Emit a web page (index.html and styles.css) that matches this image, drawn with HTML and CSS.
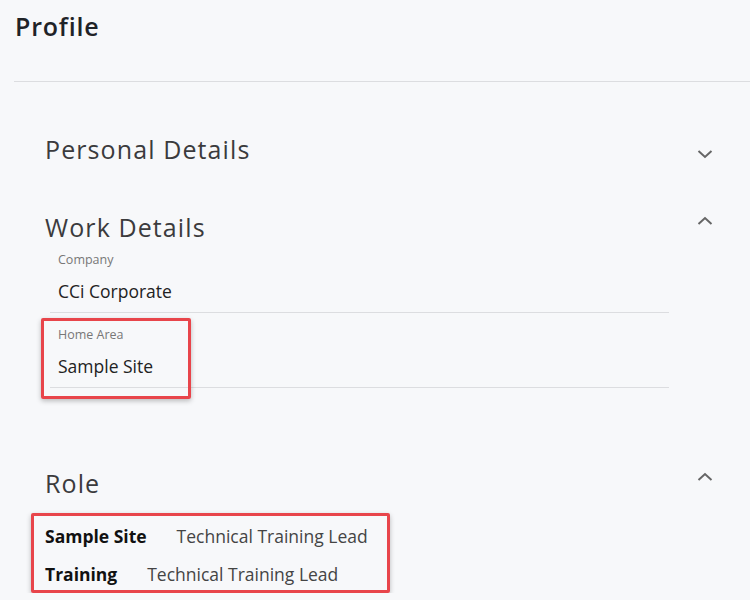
FILE: index.html
```html
<!DOCTYPE html>
<html lang="en">
<head>
    <meta charset="UTF-8">
    <title>Profile</title>
    <link rel="stylesheet" href="styles.css">
</head>
<body>

    <!-- Page header -->
    <header class="page-header">
        <h1>Profile</h1>
    </header>
    <div class="divider"></div>

    <main class="sections">

        <!-- Personal Details (collapsed) -->
        <section class="section">
            <div class="section-head">
                <h2>Personal Details</h2>
                <svg class="chev chev-down" width="16" height="10" viewBox="0 0 16 10"><path d="M1.5 2 L8 8 L14.5 2" fill="none" stroke="#666" stroke-width="2"/></svg>
            </div>
        </section>

        <!-- Work Details -->
        <section class="section">
            <div class="section-head">
                <h2>Work Details</h2>
                <svg class="chev chev-up" width="16" height="10" viewBox="0 0 16 10"><path d="M1.5 8 L8 2 L14.5 8" fill="none" stroke="#666" stroke-width="2"/></svg>
            </div>
            <div class="field">
                <div class="field-label">Company</div>
                <div class="field-value">CCi Corporate</div>
            </div>
            <div class="field">
                <div class="field-label">Home Area</div>
                <div class="field-value">Sample Site</div>
                <span class="highlight highlight-area"></span>
            </div>
        </section>

        <!-- Role -->
        <section class="section section-role">
            <div class="section-head">
                <h2>Role</h2>
                <svg class="chev chev-up" width="16" height="10" viewBox="0 0 16 10"><path d="M1.5 8 L8 2 L14.5 8" fill="none" stroke="#666" stroke-width="2"/></svg>
            </div>
            <div class="role-list">
                <div class="role-row">
                    <span class="role-site">Sample Site</span>
                    <span class="role-title">Technical Training Lead</span>
                </div>
                <div class="role-row">
                    <span class="role-site">Training</span>
                    <span class="role-title">Technical Training Lead</span>
                </div>
                <span class="highlight highlight-role"></span>
            </div>
        </section>

    </main>

</body>
</html>
```

FILE: styles.css
```css
* {
    margin: 0;
    padding: 0;
    box-sizing: border-box;
}
body {
    background-color: #f7f8fa;
    font-family: 'Open Sans', sans-serif;
    color: #222;
    overflow: hidden;
}
.page-header {
    height: 81px;
    padding: 10px 15px;
}
.page-header h1 {
    font-size: 25px;
    font-weight: 600;
    line-height: 32px;
    letter-spacing: 0.8px;
    color: #1f2328;
}
.divider {
    margin-left: 14px;
    border-top: 1px solid #dcdde0;
}
.sections {
    padding: 0 36px 0 45px;
}
.section-head {
    display: flex;
    justify-content: space-between;
    align-items: center;
    height: 24px;
}
.section-head h2 {
    font-size: 25px;
    font-weight: 400;
    line-height: 24px;
    letter-spacing: 1.1px;
    color: #3b3b3d;
}
.chev {
    margin-right: 1px;
}
.chev-down {
    margin-top: 10px;
}
.chev-up {
    margin-top: -12px;
}
.section {
    margin-top: 54px;
}
.section:first-child {
    margin-top: 55px;
}
.section-role {
    margin-top: 83px;
}
.field {
    position: relative;
    margin: 0 45px 0 5px;
    padding: 14px 8px 9px;
    border-bottom: 1px solid #dcdde0;
}
.section-head + .field {
    margin-top: -1px;
}
.field-label {
    font-size: 12.5px;
    line-height: 16px;
    color: #777;
}
.field-value {
    margin-top: 11px;
    font-size: 17.5px;
    line-height: 24px;
    color: #222;
}
.role-list {
    position: relative;
    margin-top: 22px;
}
.role-row {
    display: flex;
    gap: 30px;
    line-height: 38px;
    font-size: 17.5px;
}
.role-site {
    font-weight: 700;
    color: #111;
}
.role-title {
    color: #444;
}
.highlight {
    position: absolute;
    border: 3px solid #e8454b;
    border-radius: 2px;
    box-shadow: 0 2px 5px rgba(0, 0, 0, 0.25);
    pointer-events: none;
}
.highlight-area {
    top: 5px;
    left: -9px;
    width: 150px;
    height: 81px;
}
.highlight-role {
    top: -4px;
    left: -14px;
    width: 359px;
    height: 80px;
}
```
